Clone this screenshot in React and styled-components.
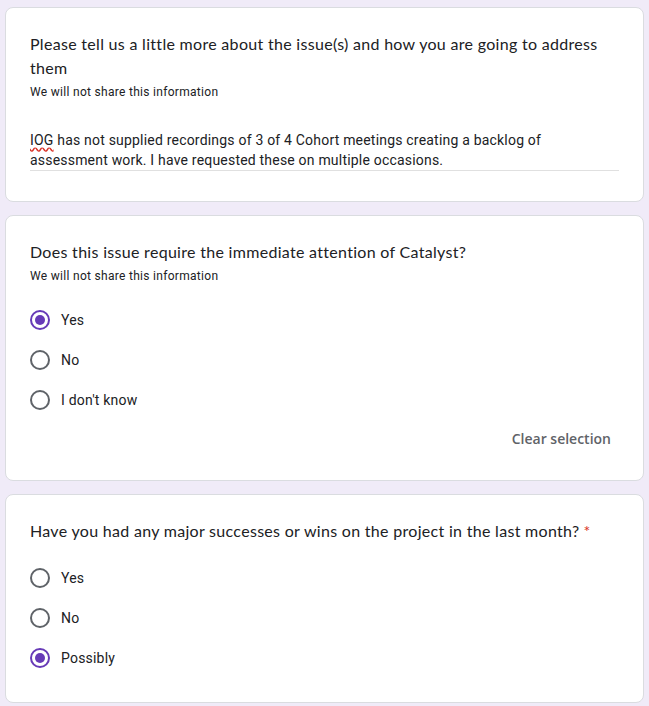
import React from 'react';
import styled, { createGlobalStyle } from 'styled-components';

const GlobalStyle = createGlobalStyle`
  html, body {
    margin: 0;
    padding: 0;
    background-color: #f0ebf8;
  }
  body {
    font-family: Roboto, "Liberation Sans", sans-serif;
    color: #202124;
  }
`;

const Page = styled.div`
  display: flex;
  flex-direction: column;
  gap: 13px;
  padding: 7px 5px 4px 5px;
`;

const Card = styled.div`
  background-color: #fff;
  border: 1px solid #dadce0;
  border-radius: 8px;
  padding: 24px;
  padding-bottom: ${({ $bottom }) => $bottom || 24}px;
`;

const Title = styled.div`
  font-family: Lato, "Open Sans", sans-serif;
  font-size: 16px;
  line-height: 24px;
  letter-spacing: 0.3px;
  color: #202124;
`;

const Star = styled.span`
  color: #d93025;
  margin-left: 4px;
`;

const Hint = styled.div`
  font-size: 12px;
  line-height: 18px;
  letter-spacing: 0.3px;
  margin-top: 3px;
  color: #202124;
`;

const Answer = styled.div`
  margin-top: 29px;
  font-size: 14px;
  line-height: 20px;
  letter-spacing: 0.2px;
  border-bottom: 1px solid #e0e0e0;
`;

const Typo = styled.span`
  text-decoration: underline wavy #d93025;
  text-decoration-skip-ink: none;
  text-underline-offset: 2px;
`;

const Options = styled.div`
  display: flex;
  flex-direction: column;
  margin-top: ${({ $top }) => $top}px;
`;

const Option = styled.label`
  display: flex;
  align-items: center;
  height: 40px;
  font-size: 14px;
  letter-spacing: 0.2px;
  color: #202124;
  cursor: pointer;
`;

const Radio = styled.span`
  box-sizing: border-box;
  width: 20px;
  height: 20px;
  border-radius: 50%;
  border: 2px solid ${({ $checked }) => ($checked ? '#673ab7' : '#5f6368')};
  display: flex;
  align-items: center;
  justify-content: center;
  margin-right: 11px;

  &::after {
    content: '';
    width: 10px;
    height: 10px;
    border-radius: 50%;
    background-color: #673ab7;
    display: ${({ $checked }) => ($checked ? 'block' : 'none')};
  }
`;

const Footer = styled.div`
  display: flex;
  justify-content: flex-end;
`;

const ClearButton = styled.button`
  font-family: "Open Sans", Roboto, sans-serif;
  font-weight: 600;
  font-size: 14px;
  color: #5f6368;
  background: none;
  border: none;
  height: 36px;
  padding: 0 8px;
  cursor: pointer;
`;

const Question = ({ options, checked, top }) => (
  <Options $top={top}>
    {options.map((o) => (
      <Option key={o}>
        <Radio $checked={o === checked} />
        {o}
      </Option>
    ))}
  </Options>
);

const App = () => {
  return (
    <>
      <GlobalStyle />
      <Page>
        <Card $bottom={30}>
          <Title>
            Please tell us a little more about the issue(s) and how you are going to address them
          </Title>
          <Hint>We will not share this information</Hint>
          <Answer>
            <Typo>IOG</Typo> has not supplied recordings of 3 of 4 Cohort meetings creating a backlog of
            assessment work. I have requested these on multiple occasions.
          </Answer>
        </Card>

        <Card>
          <Title>Does this issue require the immediate attention of Catalyst?</Title>
          <Hint>We will not share this information</Hint>
          <Question top={15} options={['Yes', 'No', "I don't know"]} checked="Yes" />
          <Footer>
            <ClearButton>Clear selection</ClearButton>
          </Footer>
        </Card>

        <Card>
          <Title>
            Have you had any major successes or wins on the project in the last month?
            <Star>*</Star>
          </Title>
          <Question top={15} options={['Yes', 'No', 'Possibly']} checked="Possibly" />
        </Card>
      </Page>
    </>
  );
};

export default App;
